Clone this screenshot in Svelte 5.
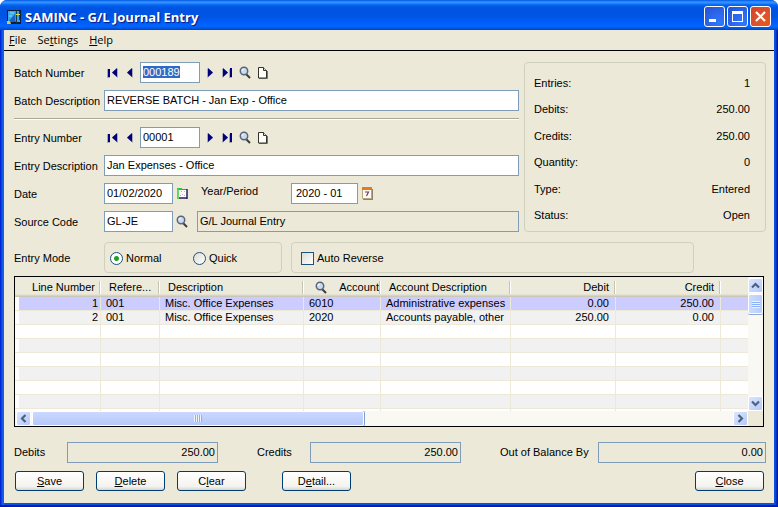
<script>
  import { onMount } from 'svelte';

  const columns = [
    { key: 'line', label: 'Line Number', width: 82, align: 'right' },
    { key: 'reference', label: 'Refere...', width: 59 },
    { key: 'description', label: 'Description', width: 144 },
    { key: 'account', label: 'Account', width: 77, finder: true },
    { key: 'accountDesc', label: 'Account Description', width: 130 },
    { key: 'debit', label: 'Debit', width: 105, align: 'amount' },
    { key: 'credit', label: 'Credit', width: 105, align: 'amount' },
  ];

  const lines = [
    { line: 1, reference: '001', description: 'Misc. Office Expenses', account: '6010', accountDesc: 'Administrative expenses', debit: '0.00', credit: '250.00' },
    { line: 2, reference: '001', description: 'Misc. Office Expenses', account: '2020', accountDesc: 'Accounts payable, other', debit: '250.00', credit: '0.00' },
  ];

  // the grid always shows eight rows and the top of a ninth
  const rows = Array.from({ length: 9 }, (_, i) => lines[i] ?? {});

  const summary = [
    ['Entries:', '1'],
    ['Debits:', '250.00'],
    ['Credits:', '250.00'],
    ['Quantity:', '0'],
    ['Type:', 'Entered'],
    ['Status:', 'Open'],
  ];

  let batchNumber = $state('000189');
  let batchDescription = $state('REVERSE BATCH - Jan Exp - Office');
  let entryNumber = $state('00001');
  let entryDescription = $state('Jan Expenses - Office');
  let date = $state('01/02/2020');
  let period = $state('2020 - 01');
  let sourceCode = $state('GL-JE');
  let mode = $state('normal');
  let autoReverse = $state(false);
  let selected = $state(0);

  let batchInput;

  onMount(() => {
    batchInput.focus();
    batchInput.select();
  });
</script>

{#snippet finderIcon()}
  <svg width="12" height="13" viewBox="0 0 12 13">
    <path d="M7 8l4 4" stroke="#3c3c3c" stroke-width="2" />
    <circle cx="5" cy="5" r="3.700" fill="#c9dbf0" stroke="#5a6478" stroke-width="1.500" />
    <path d="M3 5a2 2 0 0 1 2-2" stroke="#fff" fill="none" />
  </svg>
{/snippet}

{#snippet firstIcon()}
  <svg width="12" height="10" viewBox="0 0 12 10">
    <path d="M0 1h3v9H0zM11 0v10L5 5z" fill="#a9a9bb" />
    <path d="M1 1h2v8H1zM10 0v9L5 4.500z" fill="#00007b" />
  </svg>
{/snippet}

{#snippet prevIcon()}
  <svg width="7" height="10" viewBox="0 0 7 10">
    <path d="M7 0v10L1 5z" fill="#a9a9bb" />
    <path d="M6 0v9L1 4.500z" fill="#00007b" />
  </svg>
{/snippet}

{#snippet nextIcon()}
  <svg width="7" height="10" viewBox="0 0 7 10">
    <path d="M0 0v10L6 5z" fill="#a9a9bb" />
    <path d="M1 0v9l5-4.500z" fill="#00007b" />
  </svg>
{/snippet}

{#snippet lastIcon()}
  <svg width="12" height="10" viewBox="0 0 12 10">
    <path d="M8 1h3v9H8zM1 0v10l6-5z" fill="#a9a9bb" />
    <path d="M9 0h2v9H9zM2 0v9l5-4.500z" fill="#00007b" />
  </svg>
{/snippet}

{#snippet newIcon()}
  <svg width="11" height="12" viewBox="0 0 11 12">
    <path d="M9.500 4v7.500H1" fill="none" stroke="#77776a" />
    <path d="M0.500 0.500h5l3 3v7.500h-8z" fill="#fffff4" stroke="#333" />
    <path d="M5.500 0.500v3h3" fill="#ddd" stroke="#333" />
  </svg>
{/snippet}

{#snippet arrow(d)}
  <svg width="9" height="9" viewBox="0 0 9 9">
    <path {d} fill="none" stroke="#4d6185" stroke-width="2.200" />
  </svg>
{/snippet}

<div class="window">
  <header class="titlebar">
    <svg class="app-icon" width="14" height="14" viewBox="0 0 14 14">
      <rect width="14" height="14" fill="#111c38" />
      <rect x="1" y="1" width="12" height="11" fill="#36a8ea" />
      <path d="M1 12L9 3v9z" fill="#1b62c8" />
      <path d="M3 3h4M2 6h3" stroke="#8bdcff" />
      <path d="M9.500 0v13M12.500 1v9" stroke="#173b47" stroke-width="1" />
      <path d="M8 4.500h5" stroke="#d9e34b" />
      <path d="M8.500 1v10" stroke="#3fae5b" />
      <path d="M0 11h3l1 3H0z" fill="#e6c531" />
    </svg>
    <h1>SAMINC - G/L Journal Entry</h1>
    <div class="window-buttons">
      <button type="button" aria-label="Minimize">
        <svg width="19" height="19" viewBox="0 0 19 19"><path d="M4 12h7v3H4z" fill="#fff" /></svg>
      </button>
      <button type="button" aria-label="Maximize">
        <svg width="19" height="19" viewBox="0 0 19 19"><path d="M4 4h11v11H4zM5 7v7h9V7z" fill="#fff" fill-rule="evenodd" /></svg>
      </button>
      <button type="button" class="close" aria-label="Close window">
        <svg width="19" height="19" viewBox="0 0 19 19"><path d="M5 5l9 9M14 5l-9 9" stroke="#fff" stroke-width="2.200" /></svg>
      </button>
    </div>
  </header>

  <nav class="menu">
    <button type="button"><u>F</u>ile</button>
    <button type="button">Se<u>t</u>tings</button>
    <button type="button"><u>H</u>elp</button>
  </nav>

  <main>
    <div class="top">
      <div class="form">
        <div class="row">
          <label class="caption" for="batch-number">Batch Number</label>
          <div class="navigator">
            <button type="button" class="icon wide" aria-label="First batch">{@render firstIcon()}</button>
            <button type="button" class="icon" aria-label="Previous batch">{@render prevIcon()}</button>
            <input id="batch-number" class="number" bind:this={batchInput} bind:value={batchNumber} />
            <button type="button" class="icon" aria-label="Next batch">{@render nextIcon()}</button>
            <button type="button" class="icon wide" aria-label="Last batch">{@render lastIcon()}</button>
            <button type="button" class="icon wide" aria-label="Find batch">{@render finderIcon()}</button>
            <button type="button" class="icon new" aria-label="New batch">{@render newIcon()}</button>
          </div>
        </div>
        <div class="row">
          <label class="caption" for="batch-description">Batch Description</label>
          <input id="batch-description" class="fill" bind:value={batchDescription} />
        </div>
        <hr />
        <div class="row">
          <label class="caption" for="entry-number">Entry Number</label>
          <div class="navigator">
            <button type="button" class="icon wide" aria-label="First entry">{@render firstIcon()}</button>
            <button type="button" class="icon" aria-label="Previous entry">{@render prevIcon()}</button>
            <input id="entry-number" class="number" bind:value={entryNumber} />
            <button type="button" class="icon" aria-label="Next entry">{@render nextIcon()}</button>
            <button type="button" class="icon wide" aria-label="Last entry">{@render lastIcon()}</button>
            <button type="button" class="icon wide" aria-label="Find entry">{@render finderIcon()}</button>
            <button type="button" class="icon new" aria-label="New entry">{@render newIcon()}</button>
          </div>
        </div>
        <div class="row">
          <label class="caption" for="entry-description">Entry Description</label>
          <input id="entry-description" class="fill" bind:value={entryDescription} />
        </div>
        <div class="row">
          <label class="caption" for="date">Date</label>
          <input id="date" class="short" bind:value={date} />
          <button type="button" class="icon side" aria-label="Pick date">
            <svg width="11" height="11" viewBox="0 0 11 11">
              <path d="M1 1h9v9H1z" fill="#fff" />
              <path d="M4 3h1v1H4zM7 3h1v1H7zM5 6h1v1H5zM3 7h1v1H3zM7 7h1v1H7z" fill="#dd9acb" />
              <path d="M2 1.500h8" stroke="#6f6fa8" />
              <path d="M2 10h8M10 1v10" stroke="#27215c" stroke-width="1.500" />
              <path d="M1 0v11M0 0.500h5" stroke="#2fd12f" stroke-width="1.500" />
            </svg>
          </button>
          <label class="period-caption" for="period">Year/Period</label>
          <input id="period" class="period" bind:value={period} />
          <button type="button" class="icon side" aria-label="Pick period">
            <svg width="11" height="13" viewBox="0 0 11 13">
              <path d="M2 2h9v11H1v-1h8z" fill="#8c8468" />
              <path d="M0.500 1h9v10.500h-9z" fill="#fffdf2" stroke="#b8a77c" />
              <path d="M0 0h10v3H0z" fill="#e27a24" />
              <path d="M3 5h3.500L4.500 9" fill="none" stroke="#6b3b74" stroke-width="1.200" />
            </svg>
          </button>
        </div>
        <div class="row">
          <label class="caption" for="source-code">Source Code</label>
          <input id="source-code" class="short" bind:value={sourceCode} />
          <button type="button" class="icon side" aria-label="Find source code">{@render finderIcon()}</button>
          <input class="fill source-name" aria-label="Source description" value="G/L Journal Entry" readonly />
        </div>
      </div>

      <dl class="summary">
        {#each summary as [name, value]}
          <div>
            <dt>{name}</dt>
            <dd>{value}</dd>
          </div>
        {/each}
      </dl>
    </div>

    <div class="mode-row">
      <span class="caption" id="mode-caption">Entry Mode</span>
      <div class="group modes" role="radiogroup" aria-labelledby="mode-caption">
        <label><input type="radio" name="mode" value="normal" bind:group={mode} />Normal</label>
        <label><input type="radio" name="mode" value="quick" bind:group={mode} />Quick</label>
      </div>
      <div class="group reverse">
        <label><input type="checkbox" bind:checked={autoReverse} />Auto Reverse</label>
      </div>
    </div>

    <div class="grid">
      <div class="sheet">
        <table>
          <colgroup>
            <col class="gutter" />
            {#each columns as col}
              <col style="width: {col.width}px" />
            {/each}
            <col />
          </colgroup>
          <thead>
            <tr>
              <td></td>
              {#each columns as col}
                <th class={col.align} class:finder={col.finder}>
                  <div>
                    {#if col.finder}{@render finderIcon()}{/if}
                    <span>{col.label}</span>
                  </div>
                </th>
              {/each}
              <td></td>
            </tr>
          </thead>
          <tbody>
            {#each rows as row, i}
              <tr class:selected={i === selected} onclick={() => (selected = i)}>
                <td class="gutter"></td>
                {#each columns as col}
                  <td class={col.align}>{row[col.key] ?? ''}</td>
                {/each}
                <td></td>
              </tr>
            {/each}
          </tbody>
        </table>
      </div>
      <div class="vscroll">
        <button type="button" class="scroll-button" aria-label="Scroll up">{@render arrow('M1 6.500L4.500 3L8 6.500')}</button>
        <div class="thumb"><i></i></div>
        <button type="button" class="scroll-button down" aria-label="Scroll down">{@render arrow('M1 2.500L4.500 6L8 2.500')}</button>
      </div>
      <div class="hscroll">
        <button type="button" class="scroll-button" aria-label="Scroll left">{@render arrow('M6.500 1L3 4.500L6.500 8')}</button>
        <div class="thumb"><i></i></div>
        <button type="button" class="scroll-button right" aria-label="Scroll right">{@render arrow('M2.500 1L6 4.500L2.500 8')}</button>
      </div>
    </div>

    <div class="totals">
      <label for="total-debits">Debits</label>
      <input id="total-debits" value="250.00" readonly />
      <label for="total-credits">Credits</label>
      <input id="total-credits" value="250.00" readonly />
      <label for="out-of-balance">Out of Balance By</label>
      <input id="out-of-balance" value="0.00" readonly />
    </div>

    <div class="actions">
      <button type="button"><u>S</u>ave</button>
      <button type="button"><u>D</u>elete</button>
      <button type="button">C<u>l</u>ear</button>
      <button type="button" class="detail">D<u>e</u>tail...</button>
      <button type="button" class="close-button"><u>C</u>lose</button>
    </div>
  </main>
</div>

<style>
  :global(body) {
    background: #fff;
  }

  .window {
    box-sizing: border-box;
    display: flex;
    flex-direction: column;
    min-height: 100vh;
    background: linear-gradient(90deg, #0019cf, #166aee 3px, #0855dd 4px, #0855dd calc(100% - 4px), #0f4fe0 calc(100% - 3px), #001090);
    border-radius: 7px 7px 0 0;
    padding: 0 4px 4px;
    box-shadow: inset 0 -2px 0 #0019b5;
    overflow: hidden;
    font-family: "Liberation Sans", Arial, sans-serif;
    font-size: 11px;
    line-height: 13px;
    color: #000;
  }

  button,
  input {
    box-sizing: border-box;
    margin: 0;
    font: inherit;
    color: inherit;
  }

  svg {
    display: block;
    flex: none;
  }

  /* title bar */
  .titlebar {
    display: flex;
    align-items: center;
    height: 30px;
    margin: 0 -4px;
    padding: 3px 7px 0;
    box-sizing: border-box;
    background: linear-gradient(180deg, #0058e6 0, #3a93ff 2px, #288eff 3px, #0363f0 5px, #0054e3 8px, #0054e3 16px, #005bf5 21px, #0066ff 26px, #0058e8 28px, #0040c8 30px);
  }

  h1 {
    flex: 1;
    margin: 0 0 0 4px;
    font: bold 13px/18px "Open Sans", "Trebuchet MS", sans-serif;
    color: #fff;
    text-shadow: 1px 1px 1px #0a1883;
    white-space: nowrap;
  }

  .window-buttons {
    display: flex;
    gap: 2px;
  }

  .window-buttons button {
    width: 21px;
    height: 21px;
    padding: 0;
    border: 1px solid #fff;
    border-radius: 3px;
    background: radial-gradient(circle at 80% 85%, #2f78fb, #2d66ea 50%, #2450cc);
  }

  .window-buttons .close {
    background: radial-gradient(circle at 80% 85%, #e5571e, #dc5230 50%, #cc4224);
  }

  /* menu */
  .menu {
    display: flex;
    height: 21px;
    box-sizing: border-box;
    padding: 0 0 2px 1px;
    background: #ece9d8;
    border-bottom: 1px solid #000;
    font-family: "Open Sans", Tahoma, sans-serif;
  }

  .menu button {
    padding: 0 4px;
    border: 0;
    margin-right: 3px;
    background: none;
  }

  main {
    flex: 1;
    padding: 11px 8px 12px 10px;
    background: #ece9d8;
  }

  /* entry form */
  .top {
    display: flex;
    gap: 5px;
  }

  .form {
    flex: 1;
    display: flex;
    flex-direction: column;
    gap: 7px;
  }

  .row {
    display: flex;
    align-items: center;
    height: 21px;
  }

  .caption {
    flex: none;
    width: 90px;
    padding-top: 1px;
    box-sizing: border-box;
    white-space: nowrap;
  }

  input:not([type]),
  .totals input {
    height: 21px;
    padding: 0 2px 1px;
    border: 1px solid #7f9db9;
    border-radius: 0;
    outline: none;
    background: #fff;
    min-width: 0;
  }

  input::selection {
    background: #316ac5;
    color: #fff;
  }

  .window input[readonly] {
    background: #ece9d8;
  }

  .fill {
    flex: 1;
  }

  .row .number {
    width: 60px;
    margin: 0 3px;
  }

  .row .short {
    width: 69px;
  }

  .row .period {
    width: 67px;
    padding-left: 4px;
  }

  .navigator {
    display: flex;
    align-items: center;
  }

  .icon {
    display: flex;
    align-items: center;
    justify-content: center;
    flex: none;
    width: 15px;
    height: 19px;
    padding: 0;
    border: 0;
    background: none;
  }

  .icon.wide {
    width: 18px;
  }

  .icon.new {
    width: 19px;
  }

  .icon.side {
    width: 18px;
  }

  .period-caption {
    width: 90px;
    margin-left: 10px;
    padding-bottom: 4px;
  }

  .row .source-name {
    margin-left: 6px;
  }

  hr {
    width: 100%;
    height: 2px;
    margin: 0;
    border: 0;
    box-sizing: border-box;
    border-top: 1px solid #aca899;
    border-bottom: 1px solid #fff;
  }

  .summary {
    display: flex;
    flex-direction: column;
    justify-content: space-between;
    box-sizing: border-box;
    width: 242px;
    margin: 0;
    padding: 14px 15px 9px 9px;
    border: 1px solid #d0d0bf;
    border-radius: 4px;
  }

  .summary div {
    display: flex;
    justify-content: space-between;
  }

  dd {
    margin: 0;
  }

  .mode-row {
    display: flex;
    align-items: center;
    margin-top: 10px;
  }

  .group {
    display: flex;
    align-items: center;
    box-sizing: border-box;
    height: 31px;
    border: 1px solid #d0d0bf;
    border-radius: 4px;
    padding: 2px 5px 0;
  }

  .group label {
    display: flex;
    align-items: center;
    gap: 3px;
  }

  .modes {
    width: 178px;
  }

  .modes label {
    width: 84px;
  }

  .reverse {
    flex: 1;
    margin: 0 72px 0 9px;
    padding-left: 9px;
  }

  input[type="radio"],
  input[type="checkbox"] {
    appearance: none;
    width: 13px;
    height: 13px;
    border: 1px solid #1c5180;
    background: linear-gradient(135deg, #dcdcd7, #fff);
  }

  input[type="radio"] {
    border-radius: 50%;
  }

  input[type="radio"]:checked {
    background: radial-gradient(circle, #21a121 2px, #ffffff 3px);
  }

  input[type="checkbox"]:checked {
    background: #21a121;
  }

  /* detail grid */
  .grid {
    display: grid;
    grid-template-columns: 1fr 15px;
    grid-template-rows: 134px 15px;
    margin: 3px 2px 0 0;
    border: 1px solid #000;
    background: linear-gradient(90deg, #fff calc(100% - 15px), #ece9d8 calc(100% - 15px));
  }

  .sheet {
    overflow: hidden;
  }

  table {
    width: 100%;
    table-layout: fixed;
    border-collapse: separate;
    border-spacing: 0;
  }

  col.gutter {
    width: 4px;
  }

  thead th,
  thead td {
    height: 20px;
    box-sizing: border-box;
    padding: 0;
    background: linear-gradient(180deg, #ebeadb 17px, #dedaca 18px, #c6c2b2);
    font-weight: normal;
    text-align: left;
  }

  th div {
    display: flex;
    align-items: center;
    height: 13px;
    padding-left: 8px;
    border-right: 1px solid #c7c5b2;
    box-shadow: 1px 0 0 #fff;
    margin-right: 1px;
    overflow: hidden;
    white-space: nowrap;
  }

  th.right div {
    justify-content: flex-end;
    padding-right: 4px;
  }

  th.amount div {
    justify-content: flex-end;
    padding-right: 5px;
  }

  th.finder div {
    justify-content: space-between;
    padding-left: 11px;
  }

  tbody td {
    height: 14px;
    box-sizing: border-box;
    padding: 0 0 0 5px;
    border-right: 1px solid #ece9d8;
    border-bottom: 1px solid #ece9d8;
    white-space: nowrap;
    overflow: hidden;
  }

  tbody td:last-child {
    border-right: 0;
  }

  tbody td.gutter {
    padding: 0;
    border-right: 0;
  }

  tbody td.right {
    padding: 0 2px 0 0;
    text-align: right;
  }

  tbody td.amount {
    padding: 0 6px 0 0;
    text-align: right;
  }

  tbody tr:nth-child(even) td:not(.gutter) {
    background: #f1f1f1;
  }

  tbody tr.selected td:not(.gutter) {
    background: #ccccff;
  }

  .vscroll,
  .hscroll {
    display: flex;
    background: #f9f8f2;
  }

  .vscroll {
    flex-direction: column;
    padding-top: 1px;
  }

  .hscroll {
    padding-left: 1px;
  }

  .scroll-button {
    display: flex;
    align-items: center;
    justify-content: center;
    flex: none;
    width: 15px;
    height: 15px;
    padding: 0;
    border: 1px solid #fff;
    border-radius: 2px;
    background: linear-gradient(135deg, #dbe5fd, #b5c9f8);
  }

  .scroll-button.down {
    margin-top: auto;
  }

  .scroll-button.right {
    margin-left: auto;
  }

  .thumb {
    display: flex;
    align-items: center;
    justify-content: center;
    box-sizing: border-box;
    border: 1px solid #fff;
    border-radius: 2px;
  }

  .vscroll .thumb {
    height: 20px;
    margin-top: 1px;
    background: linear-gradient(90deg, #cddcfd, #b8ccfa);
    box-shadow: 0 1px 0 #8fa9dd;
  }

  .hscroll .thumb {
    flex: 0 0 332px;
    margin-left: 1px;
    background: linear-gradient(180deg, #cbd9fe, #b6c8fa);
    box-shadow: 1px 0 0 #7f9ed0;
  }

  .thumb i {
    width: 8px;
    height: 7px;
  }

  .vscroll .thumb i {
    background: repeating-linear-gradient(180deg, #eef4fe 0 1px, #8cb0f8 1px 2px);
  }

  .hscroll .thumb i {
    background: repeating-linear-gradient(90deg, #eef4fe 0 1px, #8cb0f8 1px 2px);
  }

  /* footer */
  .totals {
    display: flex;
    align-items: center;
    margin-top: 15px;
  }

  .totals input {
    flex: 0 0 151px;
    margin-right: 39px;
    text-align: right;
  }

  .totals label {
    flex: 0 0 53px;
    white-space: nowrap;
  }

  .totals label:last-of-type {
    flex-basis: 98px;
  }

  .totals input:last-child {
    flex: 1;
    margin-right: 0;
  }

  .actions {
    display: flex;
    gap: 12px;
    margin: 8px 2px 0 1px;
  }

  .actions button {
    width: 69px;
    height: 20px;
    padding: 0;
    border: 1px solid #003c74;
    border-radius: 3px;
    background: linear-gradient(180deg, #fff, #f4f3ee 80%, #d9d5c9);
  }

  .actions .detail {
    margin-left: 24px;
  }

  .actions .close-button {
    margin-left: auto;
  }
</style>
